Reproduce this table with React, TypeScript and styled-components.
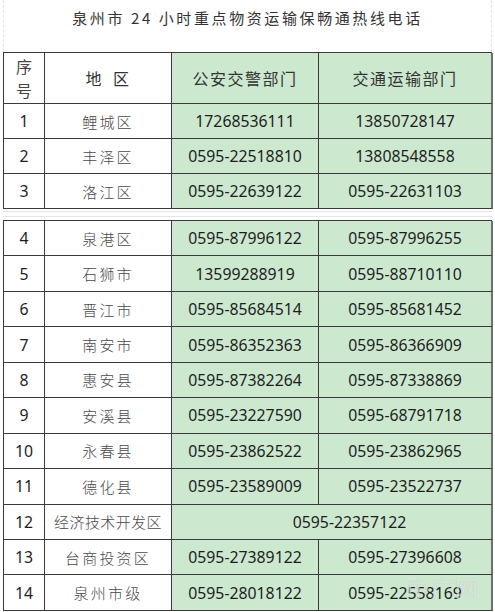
import styled, { createGlobalStyle } from 'styled-components';

const GlobalStyle = createGlobalStyle`
  body {
    margin: 0;
    background: #fff;
    font-family: "Noto Sans", "Noto Sans CJK SC", sans-serif;
  }
`;

const Page = styled.div`
  position: relative;
  width: 489px;
  margin-left: 3px;
`;

const TitleBar = styled.div`
  height: 52px;
  box-sizing: border-box;
  border-left: 1px dashed #e3e3e3;
  border-right: 1px dashed #e3e3e3;
  display: flex;
  justify-content: center;
  padding-top: 7px;
  font-family: "Noto Sans CJK SC", sans-serif;
  font-size: 15px;
  letter-spacing: 2.6px;
  color: #333;
`;

const Sheet = styled.div`
  display: grid;
  grid-template-columns: 41px 127px 147px 174px;
  border-top: 1px solid #3a3a3a;
  border-left: 1px solid #3a3a3a;
`;

const Cell = styled.div<{ $green?: boolean; $h: number; $span?: boolean; $last?: boolean }>`
  box-sizing: border-box;
  height: ${p => p.$h}px;
  display: flex;
  align-items: center;
  justify-content: center;
  background: ${p => (p.$green ? '#cce8cf' : '#fff')};
  border-bottom: 1px solid #3a3a3a;
  border-right: ${p => (p.$last ? '2px solid #6e6e6e' : '1px solid #3a3a3a')};
  grid-column: ${p => (p.$span ? 'span 2' : 'auto')};
  padding-left: ${p => (p.$span ? '36px' : '0')};
  color: #1e1e1e;
  font-size: 15.8px;
`;

const HeadText = styled.span`
  font-family: "Noto Sans CJK SC", sans-serif;
  font-size: 16px;
  letter-spacing: 1.5px;
  color: #333;
`;

const SeqHead = styled.span`
  font-family: "Noto Sans CJK SC", sans-serif;
  font-size: 16px;
  line-height: 24px;
  color: #444;
  width: 17px;
  text-align: center;
`;

const Place = styled.span<{ $tight?: boolean }>`
  font-family: "Noto Sans CJK SC", sans-serif;
  font-size: 15px;
  letter-spacing: ${p => (p.$tight ? '0.4px' : '2.2px')};
  color: #4a4a4a;
  font-weight: 300;
`;

const Spacer = styled.div`
  height: 4px;
  margin: 2px 0 3px;
  border-top: 1px solid #e5e5e5;
  border-bottom: 1px solid #e5e5e5;
`;

const Watermark = styled.div`
  position: absolute;
  left: 404px;
  top: 570px;
  font-family: "Noto Sans CJK SC", sans-serif;
  font-size: 23px;
  letter-spacing: 1px;
  color: rgba(255, 255, 255, 0.55);
  text-shadow: 0 0 1px rgba(120, 120, 120, 0.35);
  pointer-events: none;
`;

type Row = { n: number; place: string; police: string; traffic?: string };

const top: Row[] = [
  { n: 1, place: '鲤城区', police: '17268536111', traffic: '13850728147' },
  { n: 2, place: '丰泽区', police: '0595-22518810', traffic: '13808548558' },
  { n: 3, place: '洛江区', police: '0595-22639122', traffic: '0595-22631103' },
];

const rest: Row[] = [
  { n: 4, place: '泉港区', police: '0595-87996122', traffic: '0595-87996255' },
  { n: 5, place: '石狮市', police: '13599288919', traffic: '0595-88710110' },
  { n: 6, place: '晋江市', police: '0595-85684514', traffic: '0595-85681452' },
  { n: 7, place: '南安市', police: '0595-86352363', traffic: '0595-86366909' },
  { n: 8, place: '惠安县', police: '0595-87382264', traffic: '0595-87338869' },
  { n: 9, place: '安溪县', police: '0595-23227590', traffic: '0595-68791718' },
  { n: 10, place: '永春县', police: '0595-23862522', traffic: '0595-23862965' },
  { n: 11, place: '德化县', police: '0595-23589009', traffic: '0595-23522737' },
  { n: 12, place: '经济技术开发区', police: '0595-22357122' },
  { n: 13, place: '台商投资区', police: '0595-27389122', traffic: '0595-27396608' },
  { n: 14, place: '泉州市级', police: '0595-28018122', traffic: '0595-22558169' },
];

const renderRows = (rows: Row[], h: number) =>
  rows.map(r => [
    <Cell key={`${r.n}a`} $h={h}>{r.n}</Cell>,
    <Cell key={`${r.n}b`} $h={h}>
      <Place $tight={r.place.length > 5}>{r.place}</Place>
    </Cell>,
    r.traffic ? (
      <Cell key={`${r.n}c`} $h={h} $green>{r.police}</Cell>
    ) : (
      <Cell key={`${r.n}c`} $h={h} $green $span $last>{r.police}</Cell>
    ),
    r.traffic ? (
      <Cell key={`${r.n}d`} $h={h} $green $last>{r.traffic}</Cell>
    ) : null,
  ]);

export default function App() {
  return (
    <>
      <GlobalStyle />
      <Page>
        <TitleBar>泉州市 24 小时重点物资运输保畅通热线电话</TitleBar>
        <Sheet>
          <Cell $h={51}>
            <SeqHead>序号</SeqHead>
          </Cell>
          <Cell $h={51}>
            <HeadText>地&nbsp;&nbsp;区</HeadText>
          </Cell>
          <Cell $h={51} $green>
            <HeadText>公安交警部门</HeadText>
          </Cell>
          <Cell $h={51} $green $last>
            <HeadText>交通运输部门</HeadText>
          </Cell>
          {renderRows(top, 35)}
        </Sheet>
        <Spacer />
        <Sheet>{renderRows(rest, 35.45)}</Sheet>
        <Watermark>中广网</Watermark>
      </Page>
    </>
  );
}
